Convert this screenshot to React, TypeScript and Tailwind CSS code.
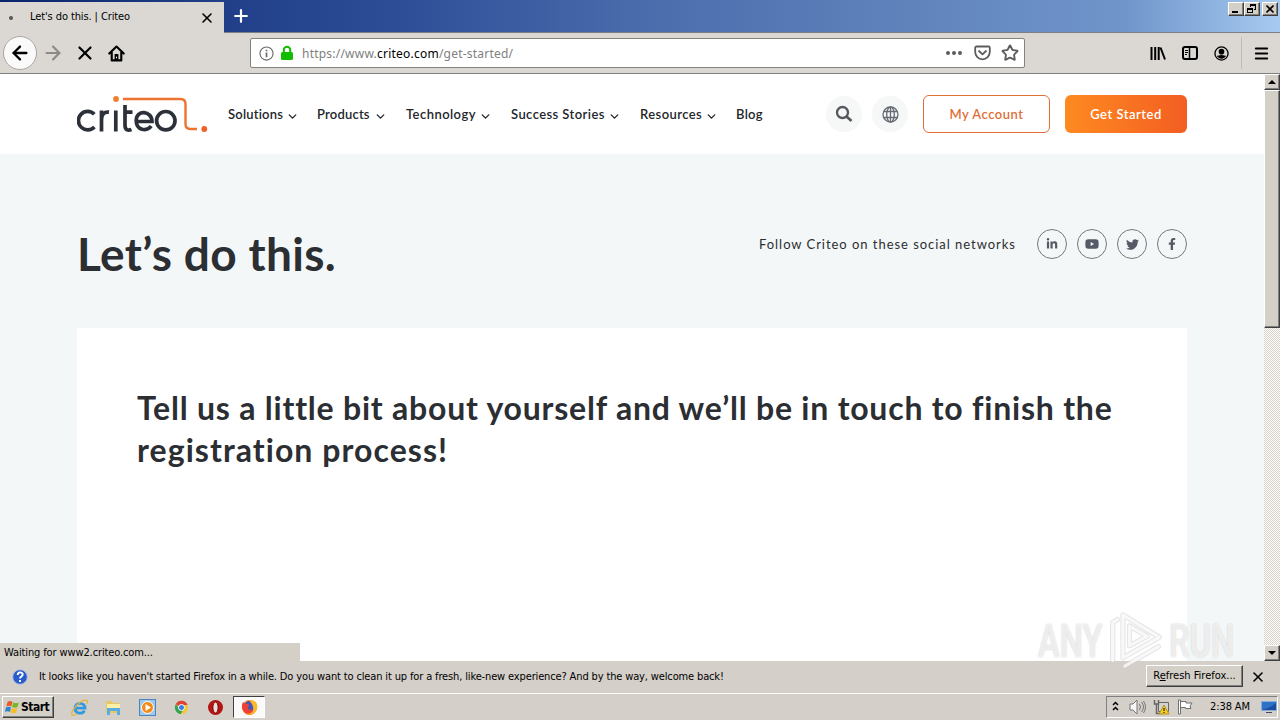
import React from "react";
import { ArrowLeft, ArrowRight, X, Plus, Search, Star, Menu, ChevronDown } from "lucide-react";
import { FaLinkedinIn, FaYoutube, FaTwitter, FaFacebookF } from "react-icons/fa";

const navItems = [
  { label: "Solutions", width: "w-[89px]", text: "w-[55px] tracking-[0.2px]", menu: true },
  { label: "Products", width: "w-[89px]", text: "w-[54px] tracking-[0.2px]", menu: true },
  { label: "Technology", width: "w-[105px]", text: "w-[70px] tracking-[0.45px]", menu: true },
  { label: "Success Stories", width: "w-[129px]", text: "w-[94px] tracking-[0.42px]", menu: true },
  { label: "Resources", width: "w-[96px]", text: "w-[62px] tracking-[0.42px]", menu: true },
  { label: "Blog", width: "w-[27px]", text: "w-[27px] tracking-[0.3px]", menu: false },
];

const socials = [
  { name: "linkedin", icon: <FaLinkedinIn size={12} /> },
  { name: "youtube", icon: <FaYoutube size={14} /> },
  { name: "twitter", icon: <FaTwitter size={13} /> },
  { name: "facebook", icon: <FaFacebookF size={12} /> },
];

const raised =
  "border border-t-white border-l-white border-r-[#404040] border-b-[#404040] shadow-[inset_-1px_-1px_0_#808080] bg-[#d4d0c8]";

const TitleBar: React.FC = () => (
  <div className="flex h-[33px] shrink-0 justify-between border-b border-[#7d7f86] bg-[linear-gradient(90deg,#0a246a_0%,#22408a_18%,#2c4c96_30%,#4a6cac_50%,#6184bd_72%,#7095cb_88%,#a6caf0_100%)]">
    <div className="flex">
      <div className="mt-[2px] flex h-[31px] w-[224px] items-center bg-[#dbd8d3]">
        <span className="ml-[9px] h-1 w-1 rounded-full bg-[#555]" />
        <span className="ml-[17px] w-[165px] whitespace-nowrap text-[11px] tracking-[-0.1px]">Let's do this. | Criteo</span>
        <X size={16} strokeWidth={2.4} className="ml-[4px]" />
      </div>
      <div className="flex h-[32px] w-[34px] items-center justify-center text-white">
        <Plus size={20} strokeWidth={2.6} />
      </div>
    </div>
    <div className="mr-[2px] mt-[2px] flex">
      <button className={`flex h-[14px] w-[16px] items-end justify-start pb-[2px] pl-[3px] ${raised}`}>
        <span className="h-[2px] w-[6px] bg-black" />
      </button>
      <button className={`flex h-[14px] w-[16px] items-center justify-center ${raised}`}>
        <svg width="10" height="10" viewBox="0 0 10 10" fill="none" stroke="#000" shapeRendering="crispEdges">
          <path d="M3.5 3V.5h5v5H7M3 1.5h6M.5 4.5h5v4h-5zM1 5.5h5" />
        </svg>
      </button>
      <button className={`ml-[2px] flex h-[14px] w-[16px] items-center justify-center ${raised}`}>
        <svg width="8" height="8" viewBox="0 0 8 8" stroke="#000" strokeWidth="1.6">
          <path d="M.5.5l7 7M7.500.5l-7 7" />
        </svg>
      </button>
    </div>
  </div>
);

const Toolbar: React.FC = () => (
  <div className="flex h-[41px] shrink-0 items-center border-b border-[#808080] bg-[#dbd8d3]">
    <div className="ml-[3px] flex h-[34px] w-[34px] items-center justify-center rounded-full border border-[#aaa7a2] bg-[#fafafa]">
      <ArrowLeft size={22} strokeWidth={2.5} />
    </div>
    <ArrowRight size={22} strokeWidth={2.4} className="ml-[5px] text-[#8d8a86]" />
    <X size={22} strokeWidth={2.4} className="ml-[10px]" />
    <svg width="17" height="17" viewBox="0 0 16 16" className="ml-[12px]">
      <path d="M1.200 8L8 1.500 14.800 8M3.500 7v7.500h9V7" fill="none" stroke="#000" strokeWidth="2" strokeLinecap="round" strokeLinejoin="round" />
      <path d="M6.200 8.500h3.600v6H6.200z" />
      <path d="M7.500 11h1v1.500h-1z" fill="#fff" />
    </svg>
    <div className="ml-[125px] flex h-[30px] w-[775px] items-center rounded-[2px] border border-[#85827e] bg-white">
      <svg width="15" height="15" viewBox="0 0 16 16" className="ml-[8px] shrink-0" fill="none" stroke="#6a6a6a">
        <circle cx="8" cy="8" r="7" strokeWidth="1.200" />
        <path d="M8 7v5M8 4v1.600" strokeWidth="1.800" />
      </svg>
      <svg width="14" height="16" viewBox="0 0 14 16" className="ml-[6px] shrink-0">
        <path d="M3.800 8V5a3.200 3.200 0 016.400 0v3" fill="none" stroke="#12bc00" strokeWidth="2" />
        <rect x="1" y="7" width="12" height="8" rx="1.500" fill="#12bc00" />
      </svg>
      <div className="ml-[8px] mt-[2px] w-[644px] shrink-0 whitespace-nowrap font-['Noto_Sans',sans-serif] text-[12px] tracking-[0.22px] text-[#808080]">
        https://www.<span className="text-black">criteo.com</span>/get-started/
      </div>
      <div className="flex w-[16px] shrink-0 justify-between">
        <span className="h-1 w-1 rounded-full bg-[#5c5c5c]" />
        <span className="h-1 w-1 rounded-full bg-[#5c5c5c]" />
        <span className="h-1 w-1 rounded-full bg-[#5c5c5c]" />
      </div>
      <svg width="17" height="16" viewBox="0 0 17 16" className="ml-[12px] shrink-0" fill="none" stroke="#5c5c5c" strokeWidth="1.800" strokeLinecap="round" strokeLinejoin="round">
        <path d="M2.500 1.500h12a1.300 1.300 0 011.300 1.300V7a7.300 7.300 0 01-14.600 0V2.800a1.300 1.300 0 011.300-1.300zM5 6l3.500 3.300L12 6" />
      </svg>
      <Star size={18} strokeWidth={2.5} className="ml-[10px] shrink-0 text-[#5c5c5c]" />
    </div>
    <svg width="16" height="16" viewBox="0 0 16 16" className="ml-[125px]" stroke="#000" strokeWidth="2">
      <path d="M1.500 2v13M5.200 2v13M8.700 2v13M10.500 2.500L15 14.500" />
    </svg>
    <svg width="16" height="14" viewBox="0 0 16 14" className="ml-[16px]" fill="none" stroke="#000">
      <rect x="1" y="1" width="14" height="12" rx="2" strokeWidth="2" />
      <path d="M7.500 1v12" strokeWidth="1.500" />
      <path d="M3 4.500h3M3 6.500h3M3 8.500h2" />
    </svg>
    <svg width="15" height="15" viewBox="0 0 16 16" className="ml-[16px]">
      <circle cx="8" cy="8" r="7" fill="none" stroke="#000" strokeWidth="1.400" />
      <circle cx="8" cy="6" r="3" />
      <path d="M3 10.500c2 0 2-1 5-1s3 1 5 1c-1 2-3 3-5 3s-4-1-5-3z" />
    </svg>
    <div className="ml-[12px] h-[32px] w-px bg-[#bfbcb7]" />
    <Menu size={17} strokeWidth={2.8} className="ml-[11px]" />
  </div>
);

const CriteoLogo: React.FC = () => (
  <svg width="132" height="40" viewBox="0 0 132 40" className="shrink-0" fill="none">
    <g stroke="#2c3038" strokeWidth="3.700">
      <path d="M17.300 20.300a9.200 9.200 0 10.100 12.600" />
      <path d="M24.500 37.500V16.500M24.500 26c0-5.500 2.500-8.500 7.500-7.800" />
      <path d="M38.800 16.500v21M48 11v20.500c0 4 2.500 5.500 6.500 4M48 18.200h7.500" />
      <path d="M58.500 27.500h16.500c0-11-15.800-12.300-15.800-.8 0 9.500 10.500 11.300 15 5.300" />
      <circle cx="88.800" cy="26.700" r="9.200" />
    </g>
    <circle cx="39" cy="5" r="2.900" fill="#f08030" />
    <path d="M46 5h57.500q5 0 5 5v20q0 5 5 5h6.500" stroke="#ee7330" strokeWidth="2.400" />
    <circle cx="127.300" cy="35" r="2.900" fill="#f0602b" />
  </svg>
);

const SiteHeader: React.FC = () => (
  <header className="flex h-[80px] shrink-0 items-center bg-white pl-[77px] font-['Lato',sans-serif] text-[#23272b]">
    <CriteoLogo />
    <nav className="ml-[19px] mt-[2px] flex w-[598px] text-[13px] font-semibold">
      {navItems.map((item) => (
        <div key={item.label} className={`flex shrink-0 items-center ${item.width}`}>
          <span className={`shrink-0 whitespace-nowrap ${item.text}`}>{item.label}</span>
          {item.menu && <ChevronDown size={13} strokeWidth={2.6} className="ml-[3px] mt-[2px] shrink-0" />}
        </div>
      ))}
    </nav>
    <div className="flex h-[36px] w-[36px] items-center justify-center rounded-full bg-[#f6f7f7] text-[#55595f]">
      <svg width="18" height="18" viewBox="0 0 18 18" fill="none" stroke="currentColor">
        <circle cx="7.500" cy="7.500" r="5.500" strokeWidth="2.300" />
        <path d="M11.500 11.500L16.500 16" strokeWidth="2.700" />
      </svg>
    </div>
    <div className="ml-[10px] flex h-[36px] w-[36px] items-center justify-center rounded-full bg-[#f6f7f7] text-[#666b74]">
      <svg width="17" height="17" viewBox="0 0 17 17" fill="none" stroke="currentColor" strokeWidth="1.300" className="mt-px">
        <circle cx="8.500" cy="8.500" r="7.500" />
        <ellipse cx="8.500" cy="8.500" rx="3.800" ry="7.500" />
        <path d="M8.500 1v15M1.800 5.500h13.400M1.800 11.500h13.400" />
      </svg>
    </div>
    <button className="ml-[15px] h-[38px] w-[127px] rounded-md border border-[#df7038] pt-[2px] text-[13px] font-semibold tracking-[0.5px] text-[#df7038]">
      My Account
    </button>
    <button className="ml-[15px] h-[38px] w-[122px] rounded-md bg-linear-to-r from-[#fe8a20] to-[#f35d22] pt-[2px] text-[13px] font-semibold tracking-[0.5px] text-white">
      Get Started
    </button>
  </header>
);

const ScrollBar: React.FC = () => (
  <div className="flex w-[16px] shrink-0 flex-col bg-[repeating-conic-gradient(#fff_0_25%,#d4d0c8_0_50%)] bg-[size:2px_2px]">
    <div className={`flex h-[16px] items-center justify-center ${raised}`}>
      <span className="border-x-4 border-b-4 border-x-transparent border-b-black" />
    </div>
    <div className={`h-[238px] ${raised}`} />
    <div className={`mt-auto flex h-[16px] items-center justify-center ${raised}`}>
      <span className="border-x-4 border-t-4 border-x-transparent border-t-black" />
    </div>
  </div>
);

const Watermark: React.FC = () => (
  <div className="pointer-events-none absolute left-[1038px] top-[607px] flex h-[68px] w-[200px] items-center font-['Roboto',sans-serif] text-[46px] font-medium text-white/70 [text-shadow:0_0_2px_#c4c4c4]">
    <span className="w-[70px] origin-left scale-x-[0.71]">ANY</span>
    <svg width="56" height="66" viewBox="0 0 60 66" fill="none" className="shrink-0" strokeLinejoin="round" strokeLinecap="round">
      <path d="M5 54V13l5-3M16 5v46l39-22zM23 17v21l19-10zM18 60l36-21" stroke="#c8c8c8" strokeOpacity=".5" strokeWidth="5.500" />
      <path d="M5 54V13l5-3M16 5v46l39-22zM23 17v21l19-10zM18 60l36-21" stroke="#fff" strokeOpacity=".75" strokeWidth="3.500" />
    </svg>
    <span className="ml-[5px] w-[66px] origin-left scale-x-[0.71]">RUN</span>
  </div>
);

const PageContent: React.FC = () => (
  <div className="relative flex h-[587px] shrink-0">
    <main className="flex w-[1264px] flex-col overflow-hidden bg-[#f4f7f7]">
      <SiteHeader />
      <div className="flex h-[174px] shrink-0 items-start justify-between pl-[77px] pr-[77px] font-['Lato',sans-serif] text-[#2b2e32]">
        <h1 className="mt-[73px] whitespace-nowrap text-[46px] font-bold leading-[54px] tracking-[0.35px]">Let’s do this.</h1>
        <div className="mt-[75px] flex items-center">
          <span className="mt-[2px] w-[278px] whitespace-nowrap text-[13px] tracking-[0.96px]">Follow Criteo on these social networks</span>
          <div className="flex gap-[10px]">
            {socials.map((s) => (
              <div key={s.name} className="flex h-[30px] w-[30px] items-center justify-center rounded-full border border-[#74797e] text-[#555a66]">
                {s.icon}
              </div>
            ))}
          </div>
        </div>
      </div>
      <section className="mx-[77px] h-[333px] bg-white pl-[60px] pt-[59px] font-['Lato',sans-serif] text-[#2b2e32]">
        <h2 className="whitespace-nowrap text-[32px] font-bold leading-[42px] tracking-[0.78px]">
          Tell us a little bit about yourself and we’ll be in touch to finish the
          <br />
          <span className="tracking-[1.06px]">registration process!</span>
        </h2>
      </section>
    </main>
    <ScrollBar />
    <div className="absolute bottom-0 left-0 flex h-[18px] w-[300px] items-center whitespace-nowrap bg-[#d4d0c8] pl-[4px] pt-[3px] text-[11px] tracking-[-0.12px]">
      Waiting for www2.criteo.com...
    </div>
  </div>
);

const NotificationBar: React.FC = () => (
  <div className="flex h-[32px] shrink-0 items-center bg-[#d4cfc8] text-[11px]">
    <svg width="16" height="16" viewBox="0 0 16 16" className="ml-[12px]">
      <circle cx="8" cy="8" r="7.300" fill="#285bcb" stroke="#aebee0" />
      <path d="M5.700 6c0-3.500 5-3.200 5-.5C10.700 7.500 8 7.500 8 9.500M8 11v2" stroke="#fff" strokeWidth="1.900" fill="none" />
    </svg>
    <span className="ml-[11px] mt-px w-[1107px] whitespace-nowrap tracking-[-0.14px]">
      It looks like you haven't started Firefox in a while. Do you want to clean it up for a fresh, like-new experience? And by the way, welcome back!
    </span>
    <button className={`mb-[2px] h-[22px] w-[97px] shrink-0 whitespace-nowrap pt-px ${raised}`}>
      R<span className="underline">e</span>fresh Firefox...
    </button>
    <X size={16} strokeWidth={2.4} className="ml-[7px]" />
  </div>
);

const TaskIcons: React.FC = () => (
  <div className="ml-[17px] flex items-center gap-[17px]">
    <svg width="17" height="17" viewBox="0 0 17 17" fill="none">
      <path d="M4 9.200h10c0-6.500-10-6.500-10 0 0 6 7.500 6 9.500 2.500" stroke="#3399de" strokeWidth="2.800" />
      <path d="M1 16C-1 12 11-1 16 1.500c1 1 .500 2-.5 3.500M1 16c1 1 3 0 5-1.200" stroke="#e5b63c" strokeWidth="1.300" />
    </svg>
    <svg width="17" height="17" viewBox="0 0 17 17">
      <path d="M1 2h6l1 2h7v10H1z" fill="#e8c765" />
      <path d="M2 5h13v4H2z" fill="#fff0a8" />
      <path d="M2 9h13v7h-3v-4H5v4H2z" fill="#58aee2" />
    </svg>
    <svg width="17" height="17" viewBox="0 0 17 17">
      <rect x=".5" y=".5" width="16" height="16" fill="#9bcaf0" stroke="#4f83bc" />
      <circle cx="8.500" cy="8.500" r="6" fill="#f48b16" stroke="#fff" />
      <path d="M6.500 5l5.500 3.500-5.500 3.500z" fill="#fff" />
    </svg>
    <svg width="17" height="17" viewBox="0 0 17 17">
      <circle cx="8.500" cy="8.500" r="6.500" fill="#f3c72e" />
      <path d="M2.800 5.200A6.500 6.500 0 0114.600 6H8.500v3z" fill="#df4135" />
      <path d="M2.800 5.200a6.500 6.500 0 005 9.800l3-5.500H6z" fill="#32a352" />
      <circle cx="8.500" cy="8.500" r="3" fill="#3a7be4" stroke="#fff" />
    </svg>
    <svg width="17" height="17" viewBox="0 0 17 17">
      <circle cx="8.500" cy="8.500" r="7.500" fill="#b41414" />
      <ellipse cx="8.500" cy="8.500" rx="2.600" ry="5.500" fill="#f1dcdc" stroke="#6e0909" />
    </svg>
  </div>
);

const TaskBar: React.FC = () => (
  <div className="flex h-[27px] shrink-0 items-center border-t border-white bg-[#d4cfc8]">
    <button className={`ml-[2px] flex h-[22px] w-[52px] items-center pl-[2px] ${raised}`}>
      <svg width="15" height="15" viewBox="0 0 15 15" className="shrink-0">
        <path d="M2.500 2q2.500-2 5 0L6.300 6.500q-2.500-1.500-5 0z" fill="#e95b24" />
        <path d="M8.300 2.500q2.500 1.500 5.500 0l-1.300 4.500q-2.500 1.500-5.400 0z" fill="#76b82a" />
        <path d="M1 7.500q2.500-1.500 5 0L4.800 12q-2.500-1.700-5 0z" fill="#2d81d5" />
        <path d="M6.800 8q2.700 1.500 5.500 0L11 12.500q-2.500 1.500-5.400 0z" fill="#f4bd22" />
      </svg>
      <span className="ml-px text-[12px] font-bold tracking-[-0.5px]">Start</span>
    </button>
    <TaskIcons />
    <div className="ml-[9px] flex h-[22px] w-[32px] items-center justify-center border border-b-white border-l-[#404040] border-r-white border-t-[#404040] bg-[#fbfafa]">
      <svg width="17" height="17" viewBox="0 0 17 17">
        <circle cx="8.500" cy="8.500" r="7.500" fill="#f9821f" />
        <circle cx="8.500" cy="7" r="5" fill="#4356bc" />
        <path d="M8 1c7-1 9.500 5 8 9-1 4-6 7-11 4 5 1 8-2 7-6-.5-3-2-4-4-7z" fill="#fbb82b" />
        <path d="M2 3l2 2c2-.5 3 0 4 1L7 8.500c0 3 4 3.500 5.500 1.500-.500 5-7 6.500-10 2C0 9 1 5 2 3z" fill="#ee4136" />
      </svg>
    </div>
    <div className="ml-auto mr-[2px] flex h-[22px] w-[172px] items-center border border-b-white border-l-[#808080] border-r-white border-t-[#808080]">
      <svg width="7" height="11" viewBox="0 0 7 11" className="mb-[2px] ml-[5px]" fill="none" stroke="#000" strokeWidth="1.500">
        <path d="M1 4l2.500-2.500L6 4M1 9l2.500-2.500L6 9" />
      </svg>
      <svg width="17" height="16" viewBox="0 0 17 16" className="ml-[10px]" fill="#f7f7f7" stroke="#777">
        <path d="M1 5h3l4-4v14l-4-4H1z" />
        <path d="M10.500 5q2 3 0 6M12.500 3q4 5 0 10M14.500 2q4 6 0 12" fill="none" />
      </svg>
      <svg width="17" height="16" viewBox="0 0 17 16" className="ml-[7px]">
        <path d="M5.500 3.500h10v9h-10z" fill="#d3d3d3" stroke="#666" />
        <path d="M1.500 1v4h4V1M3.500 5v9.500h6" fill="none" stroke="#666" strokeWidth="1.500" />
        <path d="M11 6l5 9H6z" fill="#f4ce25" stroke="#b99413" />
        <path d="M11 9v3M11 13v1" stroke="#000" />
      </svg>
      <svg width="17" height="16" viewBox="0 0 17 16" className="ml-[7px]" fill="#fff" stroke="#6f6f6f">
        <path d="M1.500 1h2v14h-2zM3.500 2.500h5.500v1.500h6l-2 3 1 2.500H8.500V8.500h-5z" />
      </svg>
      <span className="ml-[16px] w-[47px] whitespace-nowrap text-[11px] tracking-[-0.1px]">2:38 AM</span>
      <svg width="16" height="14" viewBox="0 0 16 14" className="ml-[4px]">
        <path d="M.5 1.500h15v9H.5z" fill="#2e71c6" stroke="#86aedb" />
        <path d="M1 10c4-1 9-3 14-7v7z" fill="#1c4d9e" />
        <path d="M5 12h6v1H5z" fill="#446" />
      </svg>
    </div>
  </div>
);

const App: React.FC = () => {
  return (
    <div className="relative flex h-[720px] w-[1280px] flex-col overflow-hidden bg-[#d4d0c8] font-['DejaVu_Sans_Condensed','Noto_Sans',sans-serif] text-black">
      <TitleBar />
      <Toolbar />
      <PageContent />
      <NotificationBar />
      <TaskBar />
      <Watermark />
    </div>
  );
};

export default App;
